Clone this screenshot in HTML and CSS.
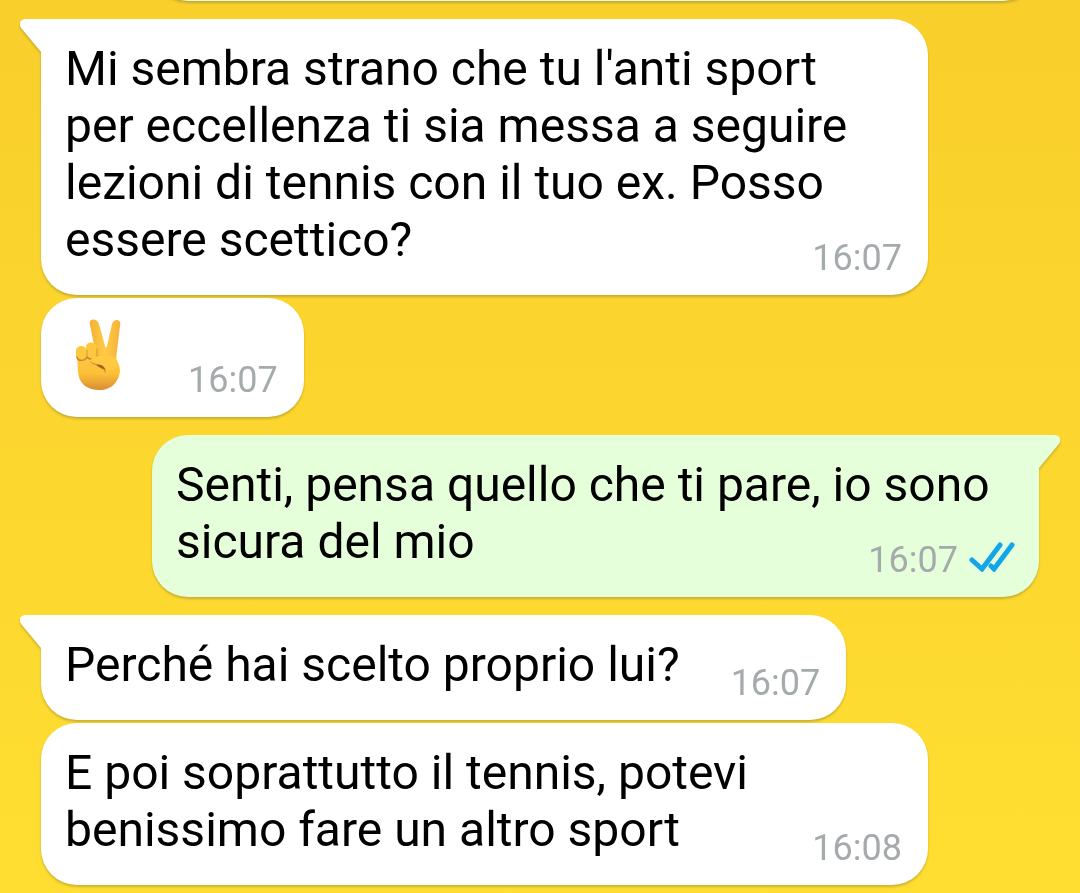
FILE: index.html
```
<!DOCTYPE html>
<html lang="it">
<head>
    <meta charset="UTF-8">
    <meta name="viewport" content="width=device-width, initial-scale=1.0">
    <title>Chat</title>
    <link rel="stylesheet" href="styles.css">
</head>
<body>
    <main class="chat">
        <div class="bubble sent first"></div>

        <div class="bubble received first tailed">
            <svg class="tail" viewBox="0 0 22 34" aria-hidden="true"><path d="M22 0H6C0 0-2 5 1.500 9.500L21 33H22Z"/></svg>
            <p class="text">Mi sembra strano che tu l'anti sport per eccellenza ti sia messa a seguire lezioni di tennis con il tuo ex. Posso essere scettico? <span class="meta"><time>16:07</time></span></p>
        </div>

        <div class="bubble received">
            <p class="text"><svg class="emoji" viewBox="0 0 46 72" role="img" aria-label="Segno di vittoria">
                <defs>
                    <linearGradient id="skin" x1="0" y1="0" x2="0" y2="1">
                        <stop offset="0" stop-color="#ffc94a"/>
                        <stop offset="0.600" stop-color="#fdc037"/>
                        <stop offset="1" stop-color="#d98d33"/>
                    </linearGradient>
                    <linearGradient id="finger" x1="0" y1="0" x2="1" y2="0">
                        <stop offset="0" stop-color="#f3b036"/>
                        <stop offset="0.500" stop-color="#ffca45"/>
                        <stop offset="1" stop-color="#f4b23a"/>
                    </linearGradient>
                </defs>
                <path fill="url(#skin)" d="M2 36L20 30L40 36C41 40 45 46 45 52C44 63 36 71 25 71C11 71 4 64 3 53Z"/>
                <path fill="url(#finger)" d="M15 6C13-1 22-1 24 5L30 27C30.500 29 31.500 29 32 27L37 5C39-1 47 0 45 7L41 40L22 41Z"/>
                <path fill="#fec740" d="M11 28C11 22 21 22 22 29V36C22 42 12 42 12 36Z"/>
                <path fill="#fec740" d="M1 32C1 26 11 25 12 32V36C12 42 1 43 1 37Z"/>
                <path fill="none" stroke="#bd782b" stroke-opacity="0.800" stroke-width="1.500" stroke-linecap="round" d="M2 38C3 43 10 42 12 38C14 41 20 41 22 37"/>
                <path fill="none" stroke="#d89632" stroke-linecap="round" d="M12 37V31M22 37V30"/>
                <path fill="#ffc941" d="M16 42C16 38 20 37 25 37H36C41 38 43 43 42 49L31 52C29 47 24 46 20 45C17 45 16 44 16 42Z"/>
                <path fill="none" stroke="#c9842c" stroke-linecap="round" d="M16 43C17 45 20 45 24 46C28 47 31 49 30 53"/>
                <path fill="#a66222" d="M21 46C25 45 30 47 30 51C27 50 24 48 21 46Z"/>
            </svg> <span class="meta"><time>16:07</time></span></p>
        </div>

        <div class="bubble sent first tailed">
            <svg class="tail" viewBox="0 0 22 34" aria-hidden="true"><path d="M0 0H16C22 0 24 5 20.500 9.500L1 33H0Z"/></svg>
            <p class="text">Senti, pensa quello che ti pare, io sono sicura del mio <span class="meta"><time>16:07</time><svg class="ticks" viewBox="0 0 46 30" role="img" aria-label="Letto"><path d="M3 18L13 27L31 3M22 24L25 27L43 3"/></svg></span></p>
        </div>

        <div class="bubble received first tailed">
            <svg class="tail" viewBox="0 0 22 34" aria-hidden="true"><path d="M22 0H6C0 0-2 5 1.500 9.500L21 33H22Z"/></svg>
            <p class="text">Perché hai scelto proprio lui? <span class="meta"><time>16:07</time></span></p>
        </div>

        <div class="bubble received">
            <p class="text">E poi soprattutto il tennis, potevi benissimo fare un altro sport <span class="meta"><time>16:08</time></span></p>
        </div>
    </main>
</body>
</html>
```
FILE: styles.css
```
body {
    margin: 0;
    font-family: Roboto, Arial, sans-serif;
    background: linear-gradient(#f9cf2b, #ffde31);
}

/* newest message sits at the bottom, older ones run off the top */
.chat {
    box-sizing: border-box;
    height: 100vh;
    padding: 0 41px 8px;
    display: flex;
    flex-direction: column;
    justify-content: flex-end;
    overflow: hidden;
}

.bubble {
    position: relative;
    flex-shrink: 0;
    box-sizing: border-box;
    max-width: calc(100% - 111px);
    min-height: 105px;
    margin-top: 3px;
    padding: 21px 40px 19px 24px;
    border-radius: 36px;
    filter: drop-shadow(0 2px 1px rgba(90, 80, 40, 0.3));
}

.received {
    align-self: flex-start;
    background: #fff;
}

.sent {
    align-self: flex-end;
    background: #e5ffdb;
}

.sent:empty {
    width: 100%;
}

.first {
    margin-top: 18px;
}

.received.tailed {
    border-top-left-radius: 0;
}

.sent.tailed {
    border-top-right-radius: 0;
}

.tail {
    position: absolute;
    top: 0;
    width: 22px;
    height: 34px;
}

.received .tail {
    left: -21px;
    fill: #fff;
}

.sent .tail {
    right: -21px;
    fill: #e5ffdb;
}

.text {
    display: flow-root;
    margin: 0;
    font-size: 48px;
    line-height: 57px;
    color: #000;
}

.meta {
    float: right;
    display: flex;
    gap: 11px;
    margin: 29px -14px 0 51px;
    font-size: 36px;
    line-height: 36px;
    color: #a5abad;
}

.emoji {
    display: block;
    float: left;
    width: 46px;
    height: 72px;
    margin: 0 16px 0 10px;
}

.emoji ~ .meta {
    margin-top: 43px;
}

.ticks {
    width: 46px;
    height: 30px;
    fill: none;
    stroke: #12a5e8;
    stroke-width: 5;
    stroke-linecap: round;
}

.sent .meta {
    margin-right: -16px;
}
```
